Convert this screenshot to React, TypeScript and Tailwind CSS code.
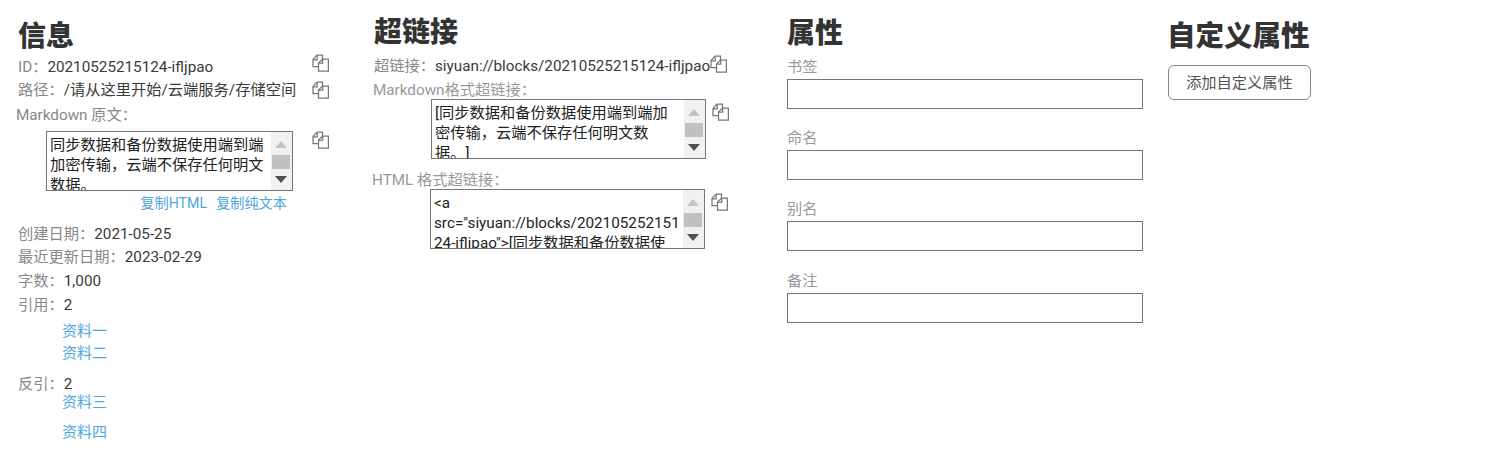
const FONT = "font-['Roboto','Noto_Sans_CJK_SC',sans-serif]";

function CopyIcon() {
  return (
    <svg width="17" height="18" viewBox="0 0 17 18" fill="none" stroke="#777" strokeWidth="1.25" className="shrink-0">
      <path d="M6.5 12.5H1V5.5L5 1H10.5V5" />
      <path d="M1 5.8H5.2V1.2" />
      <path d="M6.5 17V9L10.5 5H16.4V17Z" fill="#fff" />
      <path d="M6.5 9.2H10.7V5.2" />
    </svg>
  );
}

function Scrollbar() {
  return (
    <div className="w-[21px] shrink-0 h-full bg-[#f1f1f1] flex flex-col items-center pl-[1px] pr-[2px] pt-[9px]">
      <svg width="12" height="7" viewBox="0 0 12 7"><path d="M6 0L12 7H0Z" fill="#c4c4c4" /></svg>
      <div className="w-full h-[14px] bg-[#c1c1c1] mt-[7px]" />
      <svg width="12" height="7" viewBox="0 0 12 7" className="mt-[7px]"><path d="M0 0H12L6 7Z" fill="#505050" /></svg>
    </div>
  );
}

function Box({ children, className }: { children: React.ReactNode; className: string }) {
  return (
    <div className={`h-[60px] border border-[#767676] flex overflow-hidden bg-white ${className}`}>
      <div className="flex-1 min-w-0 pl-[3px] pt-[3px] pr-[3px] text-[15.25px] leading-[20px] text-[#222] [overflow-wrap:break-word]">{children}</div>
      <Scrollbar />
    </div>
  );
}

function Info({ label, value, className = '' }: { label: string; value: string; className?: string }) {
  return (
    <div className={`h-[22px] leading-[22px] text-[15.25px] whitespace-nowrap ${className}`}>
      <span className="text-[#888]">{label}：</span>
      <span className="text-[#3a3a3a]">{value}</span>
    </div>
  );
}

function Field({ label, className = '' }: { label: string; className?: string }) {
  return (
    <div className={className}>
      <div className="h-[23px] leading-[23px] text-[15.25px] text-[#999]">{label}</div>
      <input className="block w-[356px] h-[30px] border border-[#767676] bg-white" />
    </div>
  );
}

export default function App() {
  return (
    <div className={`${FONT} [text-spacing-trim:space-all] w-[1489px] h-[470px] bg-white flex items-start pl-[18px] overflow-hidden`}>
      {/* 信息 */}
      <div className="w-[356px] shrink-0 pt-[18px]">
        <h2 className="h-[38px] leading-[38px] text-[28px] font-black text-[#333]">信息</h2>
        <div className="w-[311px] flex justify-between items-start">
          <Info label="ID" value="20210525215124-ifljpao" />
          <div className="-mt-[2px]"><CopyIcon /></div>
        </div>
        <div className="w-[311px] flex justify-between items-start mt-[1px]">
          <Info label="路径" value="/请从这里开始/云端服务/存储空间" />
          <div className="mt-[2px]"><CopyIcon /></div>
        </div>
        <div className="h-[22px] leading-[22px] text-[15.25px] text-[#888] -ml-[2px] mt-[3px] whitespace-nowrap">Markdown 原文：</div>
        <div className="w-[311px] flex justify-between items-start mt-[5px]">
          <Box className="w-[247px] ml-[28px]">同步数据和备份数据使用端到端加密传输，云端不保存任何明文数据。</Box>
          <CopyIcon />
        </div>
        <div className="w-[269px] h-[24px] leading-[24px] flex justify-end gap-[9px] text-[14.2px] text-[#4ea6dc]">
          <span>复制HTML</span>
          <span>复制纯文本</span>
        </div>
        <Info label="创建日期" value="2021-05-25" className="mt-[8px]" />
        <Info label="最近更新日期" value="2023-02-29" className="mt-[1px]" />
        <Info label="字数" value="1,000" className="mt-[2px]" />
        <Info label="引用" value="2" className="mt-[2px]" />
        <div className="ml-[44px] mt-[4px] text-[15px] leading-[22px] text-[#4ea6dc]">资料一</div>
        <div className="ml-[44px] text-[15px] leading-[22px] text-[#4ea6dc]">资料二</div>
        <Info label="反引" value="2" className="mt-[9px]" />
        <div className="ml-[44px] -mt-[4px] text-[15px] leading-[22px] text-[#4ea6dc]">资料三</div>
        <div className="ml-[44px] mt-[8px] text-[15px] leading-[22px] text-[#4ea6dc]">资料四</div>
      </div>

      {/* 超链接 */}
      <div className="w-[413px] shrink-0 pt-[14px]">
        <h2 className="h-[38px] leading-[38px] text-[28px] font-black text-[#333]">超链接</h2>
        <div className="flex items-start mt-[3px]">
          <Info label="超链接" value="siyuan://blocks/20210525215124-ifljpao" />
          <CopyIcon />
        </div>
        <div className="h-[22px] leading-[22px] text-[15.25px] text-[#999] -ml-[1px] mt-[2px] whitespace-nowrap">Markdown格式超链接：</div>
        <div className="flex items-start gap-[6px] -mt-[2px]">
          <Box className="w-[275px] ml-[57px]">[同步数据和备份数据使用端到端加密传输，云端不保存任何明文数据。]</Box>
          <div className="mt-[4px]"><CopyIcon /></div>
        </div>
        <div className="h-[22px] leading-[22px] text-[15.25px] text-[#999] -ml-[2px] mt-[10px] whitespace-nowrap">HTML 格式超链接：</div>
        <div className="flex items-start gap-[6px] -mt-[2px]">
          <Box className="w-[275px] ml-[56px]">&lt;a src="siyuan://blocks/20210525215124-ifljpao"&gt;[同步数据和备份数据使用端到端加密传输</Box>
          <div className="mt-[4px]"><CopyIcon /></div>
        </div>
      </div>

      {/* 属性 */}
      <div className="w-[381px] shrink-0 pt-[15px]">
        <h2 className="h-[38px] leading-[38px] text-[28px] font-black text-[#333]">属性</h2>
        <Field label="书签" className="mt-[3px]" />
        <Field label="命名" className="mt-[18px]" />
        <Field label="别名" className="mt-[18px]" />
        <Field label="备注" className="mt-[19px]" />
      </div>

      {/* 自定义属性 */}
      <div className="w-[143px] shrink-0 pt-[18px]">
        <h2 className="h-[38px] leading-[38px] text-[28.5px] font-black text-[#333] whitespace-nowrap -ml-[1px]">自定义属性</h2>
        <button className="block w-[143px] h-[35px] mt-[9px] pt-[1px] border border-[#888] rounded-[6px] bg-white text-[15.25px] text-[#555]">添加自定义属性</button>
      </div>
    </div>
  );
}
